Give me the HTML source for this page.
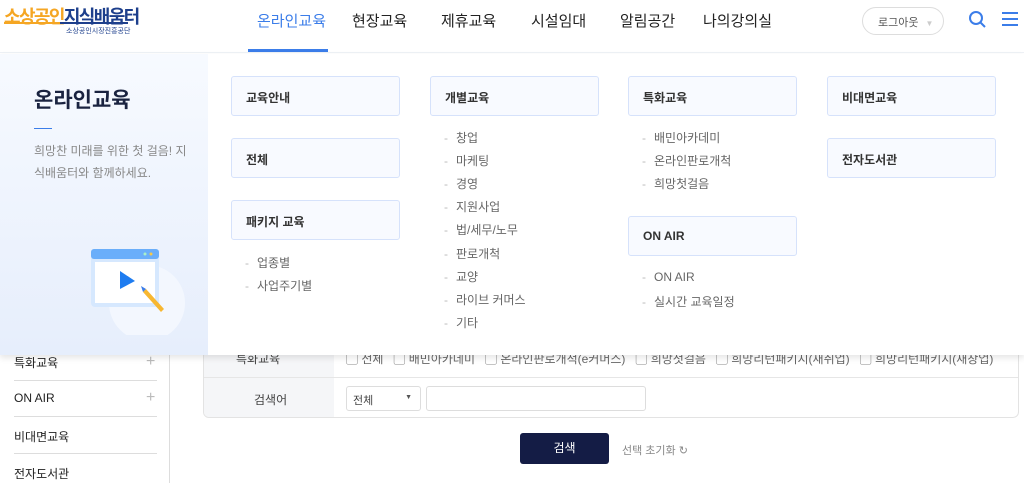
<!DOCTYPE html>
<html><head><meta charset="utf-8"><style>
*{margin:0;padding:0;box-sizing:border-box}
body{width:1024px;height:483px;overflow:hidden;background:#fff;font-family:"Liberation Sans","Noto Sans CJK KR",sans-serif;position:relative;color:#222}
.a{position:absolute}
.nav{font-size:15px;color:#222;top:10px}
.box{position:absolute;width:169px;height:40px;border:1px solid #d6e2fb;border-radius:3px;background:#f8faff;font-size:12px;font-weight:bold;color:#333;padding:12px 14px}
.sub{position:absolute;font-size:12px;color:#666}
.sub span{color:#bbb;margin-right:8px}
.side{position:absolute;left:14px;font-size:12px;color:#222}
.sep{position:absolute;left:14px;width:143px;height:1px;background:#ddd}
</style></head><body>
<!-- underlying page -->
<div class="a" style="left:169px;top:340px;width:1px;height:143px;background:#ddd"></div>
<div class="side" style="top:354px">특화교육</div><div class="a" style="left:146px;top:353px;color:#bbb;font-size:16px">+</div>
<div class="sep" style="top:380px"></div>
<div class="side" style="top:391px">ON AIR</div><div class="a" style="left:146px;top:389px;color:#bbb;font-size:16px">+</div>
<div class="sep" style="top:416px"></div>
<div class="side" style="top:428px">비대면교육</div>
<div class="sep" style="top:453px"></div>
<div class="side" style="top:465px">전자도서관</div>
<div class="a" style="left:203px;top:330px;width:816px;height:88px;border:1px solid #e3e3e3;border-radius:6px;overflow:hidden">
 <div class="a" style="left:0;top:0;width:130px;height:88px;background:#f5f6f8"></div>
 <div class="a" style="left:0;top:46px;width:816px;height:1px;background:#e6e6e6"></div>
 <div class="a" style="left:32px;top:19px;font-size:12px;color:#444">특화교육</div>
 <div class="a" style="left:142px;top:19px;font-size:12px;color:#666;white-space:nowrap">▢ 전체 &nbsp; ▢ 배민아카데미 &nbsp; ▢ 온라인판로개척(e커머스) &nbsp; ▢ 희망첫걸음 &nbsp; ▢ 희망리턴패키지(재취업) &nbsp; ▢ 희망리턴패키지(재창업)</div>
 <div class="a" style="left:50px;top:60px;font-size:12px;color:#444">검색어</div>
 <div class="a" style="left:142px;top:55px;width:75px;height:25px;border:1px solid #ddd;border-radius:3px;font-size:11px;color:#444;padding:5px 6px">전체<span style="position:absolute;right:8px;top:7px;font-size:7px;color:#555">▼</span></div>
 <div class="a" style="left:222px;top:55px;width:220px;height:25px;border:1px solid #ddd;border-radius:3px"></div>
</div>
<div class="a" style="left:520px;top:433px;width:89px;height:31px;background:#141c45;border-radius:3px;color:#fff;font-size:12px;text-align:center;line-height:31px">검색</div>
<div class="a" style="left:622px;top:442px;font-size:11px;color:#888">선택 초기화 ↻</div>

<!-- header -->
<div class="a" style="left:0;top:0;width:1024px;height:53px;background:#fff;border-bottom:1px solid #eef1f6"></div>
<div class="a" style="left:4px;top:3px;font-size:18px;font-weight:bold;letter-spacing:-1.6px;white-space:nowrap"><span style="color:#f5a623">소상공인</span><span style="color:#1d3f8c">지식배움터</span></div>
<div class="a" style="left:4px;top:22px;width:56px;height:2px;background:#f5a623"></div>
<div class="a" style="left:60px;top:22px;width:68px;height:2px;background:#1d3f8c"></div>
<div class="a" style="left:66px;top:26px;font-size:7px;color:#1d3f8c">소상공인시장진흥공단</div>
<div class="a nav" style="left:257px;color:#3b7de9">온라인교육</div>
<div class="a" style="left:248px;top:49px;width:80px;height:3px;background:#3b7de9"></div>
<div class="a nav" style="left:352px">현장교육</div>
<div class="a nav" style="left:441px">제휴교육</div>
<div class="a nav" style="left:531px">시설임대</div>
<div class="a nav" style="left:620px">알림공간</div>
<div class="a nav" style="left:703px">나의강의실</div>
<div class="a" style="left:862px;top:7px;width:82px;height:28px;border:1px solid #ddd;border-radius:14px;font-size:11px;color:#555;padding:6px 0 0 15px">로그아웃 <span style="color:#ccc;font-size:8px;margin-left:4px">▼</span></div>
<svg class="a" style="left:968px;top:10px" width="20" height="20"><circle cx="8" cy="8" r="6" fill="none" stroke="#3b7de9" stroke-width="2"/><line x1="12.5" y1="12.5" x2="17" y2="17" stroke="#3b7de9" stroke-width="2"/></svg>
<svg class="a" style="left:1002px;top:11px" width="16" height="16"><path d="M0 2H16M0 8H16M0 14H16" stroke="#3b7de9" stroke-width="2"/></svg>

<!-- dropdown -->
<div class="a" style="left:0;top:54px;width:1024px;height:301px;background:#fff;box-shadow:0 3px 6px rgba(0,0,0,.1)"></div>
<div class="a" style="left:0;top:54px;width:208px;height:301px;background:linear-gradient(#f7faff,#e6eefc)"></div>
<div class="a" style="left:34px;top:84px;font-size:21px;font-weight:bold;color:#1a2340">온라인교육</div>
<div class="a" style="left:34px;top:128px;width:18px;height:1px;background:#3b7de9"></div>
<div class="a" style="left:34px;top:140px;width:180px;font-size:12px;line-height:22px;color:#888;white-space:nowrap">희망찬 미래를 위한 첫 걸음! 지<br>식배움터와 함께하세요.</div>
<svg class="a" style="left:88px;top:245px" width="100" height="90">
<circle cx="59" cy="58" r="38" fill="#f3f7fe"/>
<rect x="3" y="4" width="68" height="58" rx="4" fill="#d6e8fe"/>
<rect x="3" y="4" width="68" height="10" rx="3" fill="#6aaefa"/>
<circle cx="57" cy="9" r="1.5" fill="#a9f0c8"/><circle cx="63" cy="9" r="1.5" fill="#f7c948"/>
<rect x="7" y="17" width="60" height="41" fill="#fff"/>
<path d="M32 26L47 36L32 44Z" fill="#1e7cf0"/>
<path d="M58 44L76 64L73 67L55 47Z" fill="#f7b731"/><path d="M55 47L53 41L58 44Z" fill="#3b7de9"/>
</svg>

<div class="box" style="left:231px;top:76px">교육안내</div>
<div class="box" style="left:231px;top:138px">전체</div>
<div class="box" style="left:231px;top:200px">패키지 교육</div>
<div class="sub" style="left:245px;top:254px"><span>-</span>업종별</div>
<div class="sub" style="left:245px;top:277px"><span>-</span>사업주기별</div>

<div class="box" style="left:430px;top:76px">개별교육</div>
<div class="sub" style="left:444px;top:129px"><span>-</span>창업</div>
<div class="sub" style="left:444px;top:152px"><span>-</span>마케팅</div>
<div class="sub" style="left:444px;top:175px"><span>-</span>경영</div>
<div class="sub" style="left:444px;top:198px"><span>-</span>지원사업</div>
<div class="sub" style="left:444px;top:221px"><span>-</span>법/세무/노무</div>
<div class="sub" style="left:444px;top:245px"><span>-</span>판로개척</div>
<div class="sub" style="left:444px;top:268px"><span>-</span>교양</div>
<div class="sub" style="left:444px;top:291px"><span>-</span>라이브 커머스</div>
<div class="sub" style="left:444px;top:314px"><span>-</span>기타</div>

<div class="box" style="left:628px;top:76px">특화교육</div>
<div class="sub" style="left:642px;top:129px"><span>-</span>배민아카데미</div>
<div class="sub" style="left:642px;top:152px"><span>-</span>온라인판로개척</div>
<div class="sub" style="left:642px;top:175px"><span>-</span>희망첫걸음</div>
<div class="box" style="left:628px;top:216px">ON AIR</div>
<div class="sub" style="left:642px;top:270px"><span>-</span>ON AIR</div>
<div class="sub" style="left:642px;top:293px"><span>-</span>실시간 교육일정</div>

<div class="box" style="left:827px;top:76px">비대면교육</div>
<div class="box" style="left:827px;top:138px">전자도서관</div>
</body></html>
